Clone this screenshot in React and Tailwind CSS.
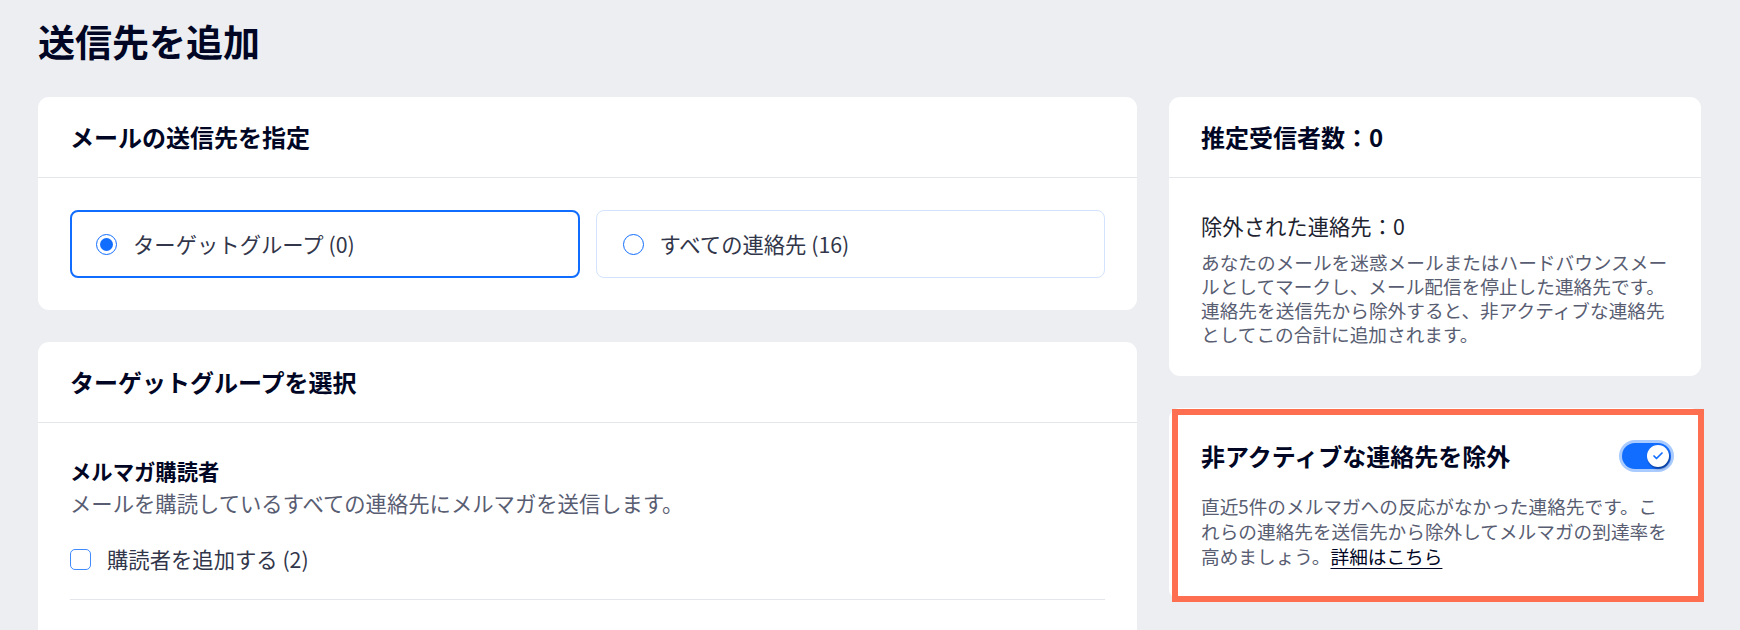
import { Check } from 'lucide-react';

function Card({ children, className = '' }) {
  return <div className={`rounded-[11px] bg-white ${className}`}>{children}</div>;
}

function CardHeader({ title }) {
  return (
    <div className="flex h-[81px] items-center border-b border-[#e4e6eb] px-8">
      <h2 className="text-[24px] font-bold leading-8 text-[#000624]">{title}</h2>
    </div>
  );
}

function RadioBox({ label, checked }) {
  return (
    <label
      className={`flex h-[68px] items-center gap-4 rounded-lg ${
        checked ? 'border-2 border-[#116dff] pl-6' : 'border border-[#d3e3fd] pl-[26px]'
      }`}
    >
      <span className="flex h-[21px] w-[21px] items-center justify-center rounded-full border border-[#116dff] bg-white">
        {checked && <span className="h-[13px] w-[13px] rounded-full bg-[#116dff]" />}
      </span>
      <span className="text-[21.33px] leading-8 text-[#32364a]">{label}</span>
    </label>
  );
}

function Toggle() {
  return (
    <div className="relative flex h-[26px] w-[49px] shrink-0 items-center rounded-full bg-[#116dff] ring-[3px] ring-[#a9cbff]">
      <span className="absolute right-[2px] flex h-[22px] w-[22px] items-center justify-center rounded-full bg-white shadow-[1px_2px_2px_rgba(0,6,36,0.45)]">
        <Check className="h-[12px] w-[12px] text-[#116dff]" strokeWidth={3.5} />
      </span>
    </div>
  );
}

export default function App() {
  return (
    <div className="min-h-screen bg-[#eceef2] pl-[38px] pr-[39px] pt-[17px] font-['Noto_Sans_CJK_JP','Noto_Sans',sans-serif]">
      <h1 className="text-[37px] font-bold leading-[48px] text-[#000624]">送信先を追加</h1>

      <div className="mt-8 grid grid-cols-[1fr_532px] items-start gap-8">
        {/* left column */}
        <div className="flex flex-col gap-8">
          <Card>
            <CardHeader title="メールの送信先を指定" />
            <div className="grid grid-cols-2 gap-4 p-8">
              <RadioBox label="ターゲットグループ (0)" checked />
              <RadioBox label="すべての連絡先 (16)" />
            </div>
          </Card>

          <Card className="pb-24">
            <CardHeader title="ターゲットグループを選択" />
            <div className="px-8 pt-8">
              <h3 className="text-[21.33px] font-bold leading-8 text-[#000624]">メルマガ購読者</h3>
              <p className="text-[21.33px] leading-8 text-[#585d72]">
                メールを購読しているすべての連絡先にメルマガを送信します。
              </p>
              <label className="mt-6 flex h-8 items-center gap-4">
                <span className="h-[21px] w-[21px] rounded-[5px] border border-[#3f8bff] bg-white" />
                <span className="text-[21.33px] leading-8 text-[#32364a]">購読者を追加する (2)</span>
              </label>
              <div className="mt-6 border-t border-[#e4e6eb]" />
            </div>
          </Card>
        </div>

        {/* right column */}
        <div className="flex flex-col gap-8">
          <Card>
            <CardHeader title="推定受信者数：0" />
            <div className="px-8 pb-[30px] pt-8">
              <p className="text-[21.33px] leading-8 text-[#20232f]">除外された連絡先：0</p>
              <p className="mt-2 whitespace-nowrap text-[18.67px] leading-6 text-[#585d72]">
                あなたのメールを迷惑メールまたはハードバウンスメー
                <br />
                ルとしてマークし、メール配信を停止した連絡先です。
                <br />
                連絡先を送信先から除外すると、非アクティブな連絡先
                <br />
                としてこの合計に追加されます。
              </p>
            </div>
          </Card>

          <div className="relative">
            <Card className="pb-8 pl-8 pr-[30px] pt-8">
              <div className="flex h-8 items-center justify-between">
                <h2 className="text-[24px] font-bold leading-8 text-[#000624]">非アクティブな連絡先を除外</h2>
                <Toggle />
              </div>
              <p className="mt-[21px] whitespace-nowrap text-[18.67px] leading-[25px] text-[#585d72]">
                直近5件のメルマガへの反応がなかった連絡先です。こ
                <br />
                れらの連絡先を送信先から除外してメルマガの到達率を
                <br />
                高めましょう。<a href="#" className="text-[#000624] underline underline-offset-4">詳細はこちら</a>
              </p>
            </Card>
            {/* highlight frame */}
            <div className="pointer-events-none absolute -bottom-[2px] -right-[3px] left-[3px] top-[1px] border-[6px] border-[#fe6f51]" />
          </div>
        </div>
      </div>
    </div>
  );
}
